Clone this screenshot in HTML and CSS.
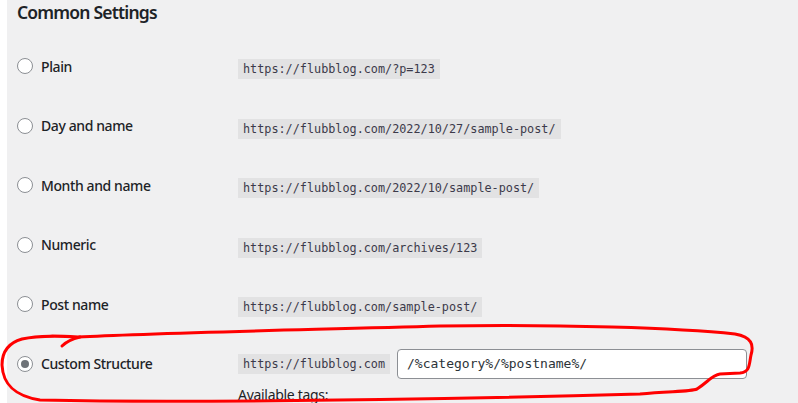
FILE: index.html
```html
<!DOCTYPE html>
<html lang="en">

<head>
    <meta charset="UTF-8">
    <meta name="viewport" content="width=device-width, initial-scale=1.0">
    <title>Permalink Settings</title>
    <link rel="stylesheet" href="styles.css">
</head>

<body>
    <div class="wrap">
        <h2 class="title">Common Settings</h2>
        <div class="options">
            <div class="row">
                <label class="choice"><span class="radio"></span>Plain</label>
                <div><code>https://flubblog.com/?p=123</code></div>
            </div>
            <div class="row">
                <label class="choice"><span class="radio"></span>Day and name</label>
                <div><code>https://flubblog.com/2022/10/27/sample-post/</code></div>
            </div>
            <div class="row">
                <label class="choice"><span class="radio"></span>Month and name</label>
                <div><code>https://flubblog.com/2022/10/sample-post/</code></div>
            </div>
            <div class="row">
                <label class="choice"><span class="radio"></span>Numeric</label>
                <div><code>https://flubblog.com/archives/123</code></div>
            </div>
            <div class="row">
                <label class="choice"><span class="radio"></span>Post name</label>
                <div><code>https://flubblog.com/sample-post/</code></div>
            </div>
            <div class="row custom">
                <label class="choice"><span class="radio checked"></span>Custom Structure</label>
                <div>
                    <div class="structure">
                        <code>https://flubblog.com</code>
                        <input class="field" type="text" value="/%category%/%postname%/">
                    </div>
                    <p class="tags">Available tags:</p>
                </div>
            </div>
        </div>
    </div>
    <!-- hand drawn marker around the custom structure row -->
    <svg class="marker" width="798" height="403" viewBox="0 0 798 403">
        <path d="M78 337 C150 333, 300 330, 440 326 C560 324, 680 328, 735 334 C752 337, 754 345, 751 355 C749 365, 750 372, 740 373 L720 374 C712 375, 708 382, 697 389 C690 392, 670 391, 640 394 C500 398, 300 402, 100 401 L40 400 C15 396, 3 385, 2 365 C2 352, 8 343, 22 339 C40 335, 60 336, 78 337" />
        <path d="M62 346 C67 341, 72 339, 80 337" />
    </svg>
</body>

</html>
```
FILE: styles.css
```css
body {
    margin: 0;
    background: #fff;
    font-family: "Noto Sans", "Open Sans", sans-serif;
    color: #1d2327;
    overflow: hidden;
}

.wrap {
    margin-left: 7px;
    height: 403px;
    padding-left: 10px;
    background: #f0f0f1;
    overflow: hidden;
}

.title {
    margin: 0;
    padding-top: 1px;
    font-size: 17.5px;
    font-weight: 600;
    line-height: 22px;
    letter-spacing: -0.8px;
}

.options {
    padding-top: 33px;
}

.row {
    display: grid;
    grid-template-columns: 221px 1fr;
    align-items: start;
    height: 59.6px;
}

.choice {
    display: flex;
    align-items: center;
    gap: 8px;
    height: 20px;
    font-size: 14px;
    font-weight: 500;
    letter-spacing: -0.4px;
}

.radio {
    position: relative;
    width: 14px;
    height: 14px;
    border: 1px solid #8c8f94;
    border-radius: 50%;
    background: #fff;
}

.radio.checked::after {
    content: "";
    position: absolute;
    top: 3px;
    left: 3px;
    width: 8px;
    height: 8px;
    border-radius: 50%;
    background: #6e7378;
}

code {
    display: inline-block;
    margin-top: -1px;
    padding: 0 5px;
    height: 20px;
    line-height: 20px;
    font-family: "DejaVu Sans Mono", "Liberation Mono", monospace;
    font-size: 11.8px;
    color: #3c3a4a;
    background: #e2e2e3;
}

.custom {
    margin-top: -5px;
}

.custom .choice {
    margin-top: 5px;
}

.structure {
    display: flex;
    align-items: center;
    gap: 7px;
}

.structure code {
    margin-top: 0;
}

.field {
    box-sizing: border-box;
    width: 350px;
    height: 30px;
    padding: 0 9px;
    border: 1px solid #8c8f94;
    border-radius: 4px;
    background: #fff;
    font-family: "DejaVu Sans Mono", "Liberation Mono", monospace;
    font-size: 13px;
    color: #2c3338;
}

.tags {
    margin: 6px 0 0;
    font-size: 14px;
    letter-spacing: -0.3px;
}

.marker {
    position: absolute;
    top: 0;
    left: 0;
    pointer-events: none;
}

.marker path {
    fill: none;
    stroke: #ff0000;
    stroke-width: 3;
    stroke-linecap: round;
    stroke-linejoin: round;
}
```
